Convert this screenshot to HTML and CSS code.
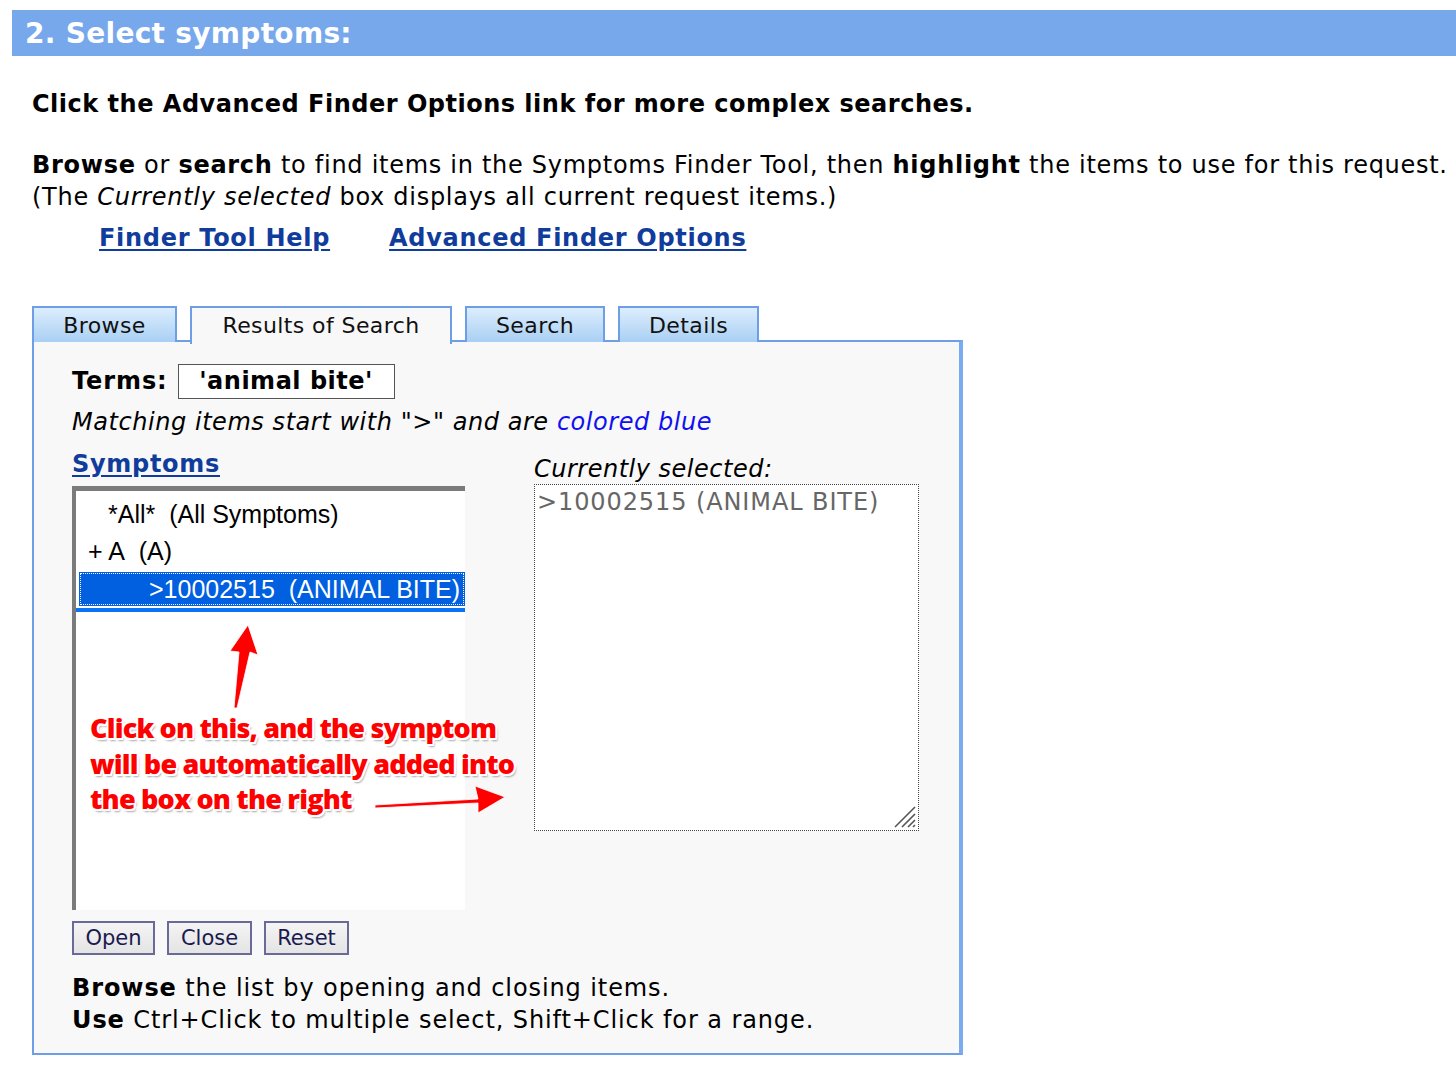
FILE: index.html
```html
<!DOCTYPE html>
<html>
<head>
<meta charset="utf-8">
<link rel="stylesheet" href="styles.css">
</head>
<body>
<div class="header">2. Select symptoms:</div>
<div class="content">
  <p class="lead">Click the Advanced Finder Options link for more complex searches.</p>
  <p class="intro"><b>Browse</b> or <b>search</b> to find items in the Symptoms Finder Tool, then <b>highlight</b> the items to use for this request.<br>(The <i>Currently selected</i> box displays all current request items.)</p>
  <div class="links">
    <a href="#" class="link">Finder Tool Help</a>
    <a href="#" class="link">Advanced Finder Options</a>
  </div>

  <div class="finder">
    <div class="tabs">
      <div class="tab tab-browse">Browse</div>
      <div class="tab tab-active">Results of Search</div>
      <div class="tab tab-search">Search</div>
      <div class="tab tab-details">Details</div>
    </div>
    <div class="panel">
      <div class="terms"><b>Terms:</b><span class="term-box">'animal bite'</span></div>
      <div class="matching">Matching items start with "&gt;" and are <span class="blue">colored blue</span></div>
      <div class="cols">
        <div class="col-left">
          <a href="#" class="link sym-link">Symptoms</a>
          <div class="listbox">
            <div class="opt opt-all">*All*&nbsp; (All Symptoms)</div>
            <div class="opt opt-a">+ A&nbsp; (A)</div>
            <div class="opt opt-sel">&gt;10002515&nbsp; (ANIMAL BITE)</div>
            <div class="opt-line"></div>
          </div>
        </div>
        <div class="col-right">
          <div class="cur-label">Currently selected:</div>
          <div class="cur-box">&gt;10002515 (ANIMAL BITE)
            <svg class="grip" width="24" height="24" viewBox="0 0 24 24"><path d="M22 2 L2 22 M22 9 L9 22 M22 15 L15 22 M22 20 L20 22" stroke="#555" stroke-width="1.6"/></svg>
          </div>
        </div>
      </div>
      <div class="buttons">
        <button class="btn btn-open">Open</button>
        <button class="btn btn-close">Close</button>
        <button class="btn btn-reset">Reset</button>
      </div>
      <p class="help"><b>Browse</b> the list by opening and closing items.<br><b>Use</b> Ctrl+Click to multiple select, Shift+Click for a range.</p>
    </div>
  </div>
</div>

<div class="note">Click on this, and the symptom<br>will be automatically added into<br>the box on the right</div>
<svg class="arrows" width="1456" height="1079" viewBox="0 0 1456 1079">
  <g fill="#f00" stroke="#fff" stroke-width="0.8" stroke-linejoin="round">
    <path d="M234 708 L239 652 L230 651 L248 625 L258 655 L250 652 L237 708 Z"/>
    <path d="M375 805 L478 799 L475 786 L505 797 L478 813 L478 803 L375 808 Z"/>
  </g>
</svg>
</body>
</html>
```
FILE: styles.css
```css
html, body {
  margin: 0;
  padding: 0;
  background: #fff;
}
body {
  font-family: "DejaVu Sans", Verdana, sans-serif;
  color: #000;
  position: relative;
  width: 1456px;
  height: 1079px;
  overflow: hidden;
}
.header {
  margin: 10px 0 0 12px;
  height: 44px;
  padding-top: 2px;
  line-height: 44px;
  background: #78a8ec;
  color: #fff;
  font-weight: bold;
  font-size: 28px;
  letter-spacing: 0.3px;
  padding-left: 13px;
}
.content {
  padding-left: 32px;
}
.lead {
  margin: 32px 0 0 0;
  font-weight: bold;
  font-size: 24px;
  line-height: 32px;
  letter-spacing: 0.5px;
}
.intro {
  margin: 29px 0 0 0;
  font-size: 24px;
  line-height: 32px;
  letter-spacing: 0.72px;
  white-space: nowrap;
}
.links {
  display: flex;
  gap: 59px;
  padding-left: 67px;
  margin-top: 9px;
}
.link {
  color: #103c9c;
  font-weight: bold;
  font-size: 24px;
  line-height: 32px;
  letter-spacing: 0.7px;
  text-decoration: underline;
  text-underline-offset: 3px;
}
.finder {
  margin-top: 52px;
  width: 930px;
}
.tabs {
  display: flex;
  height: 36px;
  position: relative;
  z-index: 2;
}
.tab {
  box-sizing: border-box;
  height: 36px;
  border: 2px solid #6e9fe6;
  border-bottom: none;
  background: linear-gradient(#dceefd, #a9cff4);
  font-size: 22px;
  line-height: 36px;
  letter-spacing: 0.4px;
  text-align: center;
  color: #111;
}
.tab-browse { width: 145px; }
.tab-active {
  width: 262px;
  margin-left: 13px;
  height: 38px;
  background: #f8f8f8;
}
.tab-search { width: 140px; margin-left: 13px; }
.tab-details { width: 141px; margin-left: 13px; }
.panel {
  box-sizing: border-box;
  margin-top: -2px;
  width: 931px;
  border: 2px solid #6e9fe6;
  border-right: 4px solid #78abf2;
  background: #f8f8f8;
  padding: 20px 0 17px 38px;
  position: relative;
  z-index: 1;
}
.terms {
  display: flex;
  align-items: center;
  font-size: 24px;
  height: 38px;
  letter-spacing: 0.9px;
}
.term-box {
  margin-left: 10px;
  box-sizing: border-box;
  height: 35px;
  width: 217px;
  border: 1px solid #555;
  background: #fff;
  font-weight: bold;
  text-align: center;
  line-height: 33px;
  letter-spacing: 0.5px;
}
.matching {
  font-style: italic;
  font-size: 24px;
  line-height: 32px;
  letter-spacing: 0.55px;
  margin-top: 6px;
}
.blue { color: #1010f0; }
.cols {
  display: flex;
  margin-top: 11px;
}
.col-left {
  width: 393px;
  display: flex;
  flex-direction: column;
  align-items: flex-start;
}
.sym-link {
  line-height: 30px;
}
.listbox {
  margin-top: 7px;
  box-sizing: border-box;
  width: 393px;
  height: 424px;
  background: #fff;
  border-left: 4px solid #7b7b7b;
  border-top: 5px solid #7b7b7b;
  padding: 5px 0 0 3px;
  font-family: "Liberation Sans", Arial, sans-serif;
  font-size: 25px;
}
.opt {
  height: 37px;
  line-height: 37px;
  white-space: nowrap;
}
.opt-all { padding-left: 29px; }
.opt-a { padding-left: 9px; }
.opt-sel {
  margin-top: 2px;
  height: 34px;
  line-height: 34px;
  background: #0060e0;
  color: #fff;
  padding-left: 70px;
  outline: 1px dotted #fff;
  outline-offset: -2px;
}
.opt-line {
  height: 4px;
  margin-top: 2px;
  margin-left: -3px;
  background: #0a74f5;
}
.col-right {
  margin-left: 69px;
  padding-top: 6px;
}
.cur-label {
  font-style: italic;
  font-size: 24px;
  line-height: 28px;
  letter-spacing: 0.5px;
}
.cur-box {
  position: relative;
  margin-top: 1px;
  box-sizing: border-box;
  width: 385px;
  height: 347px;
  border: 1px dotted #444;
  background: #fff;
  color: #666;
  font-size: 24px;
  letter-spacing: 0.9px;
  line-height: 34px;
  padding-left: 2px;
}
.grip {
  position: absolute;
  right: 1px;
  bottom: 1px;
}
.buttons {
  display: flex;
  gap: 12px;
  margin-top: 11px;
}
.btn {
  box-sizing: border-box;
  height: 34px;
  border: 2px solid #6a6a98;
  background: linear-gradient(#f4f4f4, #e4e4e4);
  font-family: "DejaVu Sans", Verdana, sans-serif;
  font-size: 21px;
  color: #1a1a50;
  padding: 0;
  margin: 0;
}
.btn-open { width: 83px; }
.btn-close { width: 85px; }
.btn-reset { width: 85px; }
.help {
  margin: 17px 0 0 0;
  font-size: 24px;
  line-height: 32px;
  letter-spacing: 0.9px;
}
.note {
  position: absolute;
  left: 90px;
  top: 710px;
  font-family: "Open Sans", sans-serif;
  font-weight: 800;
  font-size: 27px;
  line-height: 35.5px;
  letter-spacing: -0.8px;
  color: #f00;
  text-shadow: -1.5px -1.5px 0 #fff, 1.5px -1.5px 0 #fff, -1.5px 1.5px 0 #fff, 1.5px 1.5px 0 #fff, 0 2px 0 #fff, 2px 0 0 #fff, 2px 3px 2px rgba(0,0,0,0.35);
  white-space: nowrap;
  z-index: 5;
}
.arrows {
  position: absolute;
  left: 0;
  top: 0;
  pointer-events: none;
  z-index: 6;
}
```
